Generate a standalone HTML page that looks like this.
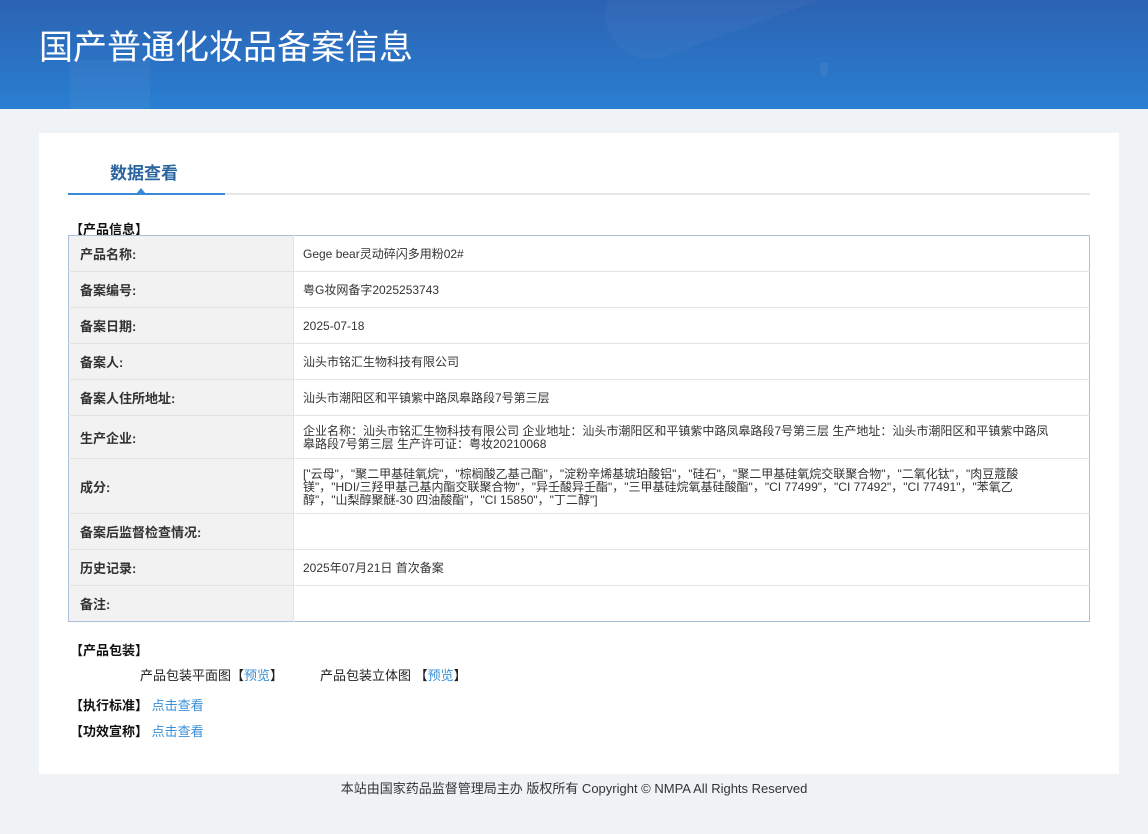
<!DOCTYPE html>
<html><head><meta charset="utf-8"><style>
*{margin:0;padding:0;box-sizing:border-box}
body{width:1148px;height:834px;background:#eff3f6;font-family:"Liberation Sans","Noto Sans CJK SC",sans-serif;color:#333;position:relative;overflow:hidden}
.hd{position:absolute;left:0;top:0;width:1148px;height:109px;background:linear-gradient(180deg,#2c62b2 0%,#2a7fd2 100%);overflow:hidden}
.hd h1{position:absolute;left:39px;top:20px;color:#fff;font-size:34px;font-weight:normal;letter-spacing:0px}
.card{position:absolute;left:39px;top:133px;width:1080px;height:641px;background:#fff}
.ab{position:absolute}
.tab{left:71px;top:26px;font-size:17px;font-weight:bold;color:#2b659f}
.line{left:29px;top:60px;width:1022px;height:2px;background:#e6e6e6}
.line2{left:29px;top:60px;width:157px;height:2px;background:#3b8ad8}
.tri{left:97px;top:55px;width:0;height:0;border-left:5px solid transparent;border-right:5px solid transparent;border-bottom:6px solid #3b8ad8}
.sec{font-size:13px;font-weight:bold;color:#111}
table{position:absolute;left:29px;top:102px;width:1022px;border-collapse:collapse;border:1px solid #a9bfd8;font-size:12px}
td{border-bottom:1px solid #e3e3e3;height:36px;vertical-align:middle;line-height:13px;padding-top:2px}
td.l{width:225px;background:#f2f2f2;font-weight:bold;font-size:13px;padding-left:11px;color:#333;border-right:1px solid #e3e3e3}
td.v{padding-left:9px;padding-right:40px}
a{color:#3a8fd9;text-decoration:none}
.ft{position:absolute;left:0;width:1148px;top:778px;text-align:center;font-size:13px;color:#333}
</style></head><body>
<div class="hd">
<div style="position:absolute;left:600px;top:-60px;width:260px;height:90px;border-radius:45px;background:rgba(255,255,255,0.03);transform:rotate(-20deg)"></div>
<div style="position:absolute;left:70px;top:60px;width:80px;height:60px;background:rgba(255,255,255,0.04)"></div>
<div style="position:absolute;left:820px;top:62px;width:8px;height:14px;border-radius:4px;background:rgba(255,255,255,0.06)"></div>
<h1>国产普通化妆品备案信息</h1></div>
<div class="card">
<div class="ab tab">数据查看</div>
<div class="ab line"></div><div class="ab line2"></div><div class="ab tri"></div>
<div class="ab sec" style="left:31px;top:86px">【产品信息】</div>
<table>
<tr><td class="l">产品名称:</td><td class="v">Gege bear灵动碎闪多用粉02#</td></tr>
<tr><td class="l">备案编号:</td><td class="v">粤G妆网备字2025253743</td></tr>
<tr><td class="l">备案日期:</td><td class="v">2025-07-18</td></tr>
<tr><td class="l">备案人:</td><td class="v">汕头市铭汇生物科技有限公司</td></tr>
<tr><td class="l">备案人住所地址:</td><td class="v">汕头市潮阳区和平镇紫中路凤皋路段7号第三层</td></tr>
<tr><td class="l" style="height:43px">生产企业:</td><td class="v">企业名称：汕头市铭汇生物科技有限公司 企业地址：汕头市潮阳区和平镇紫中路凤皋路段7号第三层 生产地址：汕头市潮阳区和平镇紫中路凤皋路段7号第三层 生产许可证：粤妆20210068</td></tr>
<tr><td class="l" style="height:55px">成分:</td><td class="v">["云母"，"聚二甲基硅氧烷"，"棕榈酸乙基己酯"，"淀粉辛烯基琥珀酸铝"，"硅石"，"聚二甲基硅氧烷交联聚合物"，"二氧化钛"，"肉豆蔻酸镁"，"HDI/三羟甲基己基内酯交联聚合物"，"异壬酸异壬酯"，"三甲基硅烷氧基硅酸酯"，"CI 77499"，"CI 77492"，"CI 77491"，"苯氧乙醇"，"山梨醇聚醚-30 四油酸酯"，"CI 15850"，"丁二醇"]</td></tr>
<tr><td class="l">备案后监督检查情况:</td><td class="v"></td></tr>
<tr><td class="l">历史记录:</td><td class="v">2025年07月21日 首次备案</td></tr>
<tr><td class="l" style="border-bottom:none">备注:</td><td class="v" style="border-bottom:none"></td></tr>
</table>
<div class="ab sec" style="left:31px;top:507px">【产品包装】</div>
<div class="ab" style="left:101px;top:532px;font-size:13px;color:#222">产品包装平面图【<a>预览</a>】</div>
<div class="ab" style="left:281px;top:532px;font-size:13px;color:#222">产品包装立体图 【<a>预览</a>】</div>
<div class="ab" style="left:31px;top:562px;font-size:13px"><b style="color:#111">【执行标准】</b> <a>点击查看</a></div>
<div class="ab" style="left:31px;top:588px;font-size:13px"><b style="color:#111">【功效宣称】</b> <a>点击查看</a></div>
</div>
<div class="ft">本站由国家药品监督管理局主办 版权所有 Copyright © NMPA All Rights Reserved</div>
</body></html>
